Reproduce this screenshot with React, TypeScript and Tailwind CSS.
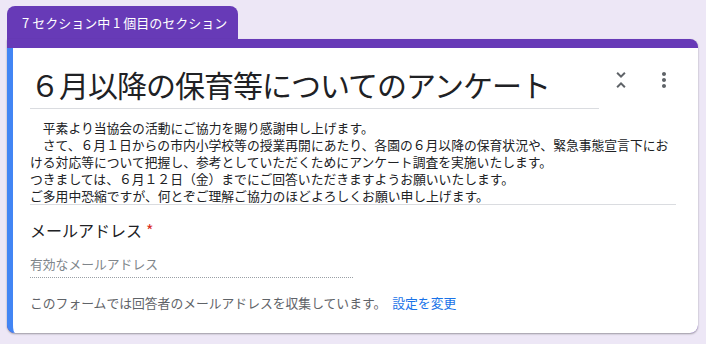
import React from "react";

const lines = [
  "　平素より当協会の活動にご協力を賜り感謝申し上げます。",
  "　さて、６月１日からの市内小学校等の授業再開にあたり、各園の６月以降の保育状況や、緊急事態宣言下にお",
  "ける対応等について把握し、参考としていただくためにアンケート調査を実施いたします。",
  "つきましては、６月１２日（金）までにご回答いただきますようお願いいたします。",
  "ご多用中恐縮ですが、何とぞご理解ご協力のほどよろしくお願い申し上げます。",
];

export default function App() {
  return (
    <div
      className="w-[706px] h-[344px] bg-[#ede7f6] pl-[7px] pr-[8px] pt-[6px] overflow-hidden"
      style={{ fontFamily: '"Noto Sans CJK JP", "Noto Sans", sans-serif' }}
    >
      <div className="w-[231px] h-[33px] rounded-t-lg bg-[#673ab7] text-white text-[13px] pl-[15px] flex items-center">
        7 セクション中 1 個目のセクション
      </div>
      <div className="rounded-b-lg rounded-tr-lg bg-[#673ab7] pt-[9px] shadow-[0_1px_2px_rgba(0,0,0,0.35)]">
        <div className="bg-white border-l-[6px] border-[#4285f4] rounded-bl-lg rounded-br-lg pl-[17px] pr-[22px] pt-[16px] pb-[22px]">
          <div className="flex items-start">
            <div className="w-[572px] border-b border-[#dadce0] pb-[4px]">
              <div className="text-[30px] leading-[40px] tracking-[-1px] text-[#202124] whitespace-nowrap">
                ６月以降の保育等についてのアンケート
              </div>
            </div>
            <div className="flex items-center ml-[10px] mt-[4px] gap-[19px]">
              <svg width="24" height="24" viewBox="0 0 24 24" fill="#5f6368">
                <path d="M7.41 18.59L8.83 20 12 16.83 15.17 20l1.41-1.41L12 14l-4.59 4.59zm9.18-13.18L15.17 4 12 7.17 8.83 4 7.41 5.41 12 10l4.59-4.59z" />
              </svg>
              <svg width="24" height="24" viewBox="0 0 24 24" fill="#5f6368">
                <path d="M12 8c1.1 0 2-.9 2-2s-.9-2-2-2-2 .9-2 2 .9 2 2 2zm0 2c-1.1 0-2 .9-2 2s.9 2 2 2 2-.9 2-2-.9-2-2-2zm0 6c-1.1 0-2 .9-2 2s.9 2 2 2 2-.9 2-2-.9-2-2-2z" />
              </svg>
            </div>
          </div>
          <div className="mt-[10px] border-b border-[#dadce0] text-[12.8px] leading-[17px] text-[#202124]">
            {lines.map((l, i) => (
              <div key={i} className="whitespace-pre">
                {l}
              </div>
            ))}
          </div>
          <div className="mt-[13px] text-[16px] leading-[24px] text-[#202124] flex">
            <span>メールアドレス</span>
            <span className="text-[#d93025] ml-[4px]">*</span>
          </div>
          <div className="mt-[12px] w-[323px] border-b border-dotted border-[#9aa0a6] pb-[3px] text-[12.8px] leading-[20px] text-[#80868b]">
            有効なメールアドレス
          </div>
          <div className="mt-[16px] text-[12.8px] leading-[17px] text-[#5f6368] flex whitespace-nowrap">
            <span>このフォームでは回答者のメールアドレスを収集しています。</span>
            <span className="ml-[6px] text-[#1a73e8]">設定を変更</span>
          </div>
        </div>
      </div>
    </div>
  );
}
